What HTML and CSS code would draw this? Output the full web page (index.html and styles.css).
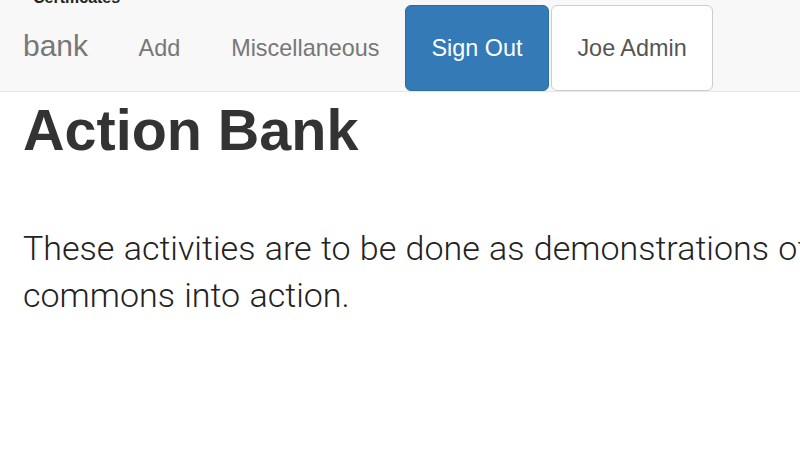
FILE: index.html
```html
<!DOCTYPE html>
<html lang="en">
<head>
<meta charset="utf-8">
<title>Action Bank</title>
<link rel="stylesheet" href="styles.css">
</head>
<body>
<header class="navbar">
  <div class="topline"><a class="cert" href="#">Certificates</a></div>
  <nav class="navrow">
    <a class="brand" href="#">bank</a>
    <a class="navlink" href="#">Add</a>
    <a class="navlink" href="#">Miscellaneous</a>
    <div class="actions">
      <button class="btn btn-primary" type="button">Sign Out</button>
      <button class="btn btn-default" type="button">Joe Admin</button>
    </div>
  </nav>
</header>
<main class="content">
  <h1 class="title">Action Bank</h1>
  <p class="lead">These activities are to be done as demonstrations of putting the<br>commons into action.</p>
</main>
</body>
</html>
```
FILE: styles.css
```css
html, body {
  margin: 0;
  padding: 0;
}

body {
  width: 800px;
  height: 458px;
  overflow: hidden;
  background: #fff;
  font-family: "Liberation Sans", Arial, sans-serif;
}

a {
  text-decoration: none;
}

.navbar {
  background: #f8f8f8;
  border-bottom: 1px solid #e7e7e7;
}

.topline {
  height: 5px;
  display: flex;
  align-items: flex-end;
  padding-left: 33px;
}

.cert {
  font-weight: 700;
  font-size: 16px;
  line-height: 14px;
  color: #222;
  white-space: nowrap;
}

.navrow {
  display: flex;
  align-items: center;
  height: 86px;
}

.brand {
  padding: 0 25px 4px 23px;
  font-size: 30px;
  line-height: 30px;
  color: #777;
}

.navlink {
  padding: 0 25.5px;
  font-size: 23.4px;
  line-height: 26px;
  color: #777;
}

.actions {
  display: flex;
  align-self: stretch;
  gap: 2px;
}

.btn {
  font-family: "Liberation Sans", Arial, sans-serif;
  font-size: 23.4px;
  line-height: 26px;
  padding: 0 25.5px;
  border: 1px solid;
  border-radius: 6px;
  cursor: pointer;
}

.btn-primary {
  background: #337ab7;
  border-color: #2e6da4;
  color: #fff;
}

.btn-default {
  background: #fff;
  border-color: #ccc;
  color: #555;
}

.content {
  padding-left: 23px;
}

.title {
  margin: 6.5px 0 0;
  font-size: 57.5px;
  line-height: 63px;
  font-weight: 700;
  color: #333;
}

.lead {
  margin: 63px 0 0;
  font-family: Roboto, "Liberation Sans", sans-serif;
  font-weight: 300;
  font-size: 34px;
  line-height: 47px;
  word-spacing: 1px;
  color: #222;
  white-space: nowrap;
}
```
